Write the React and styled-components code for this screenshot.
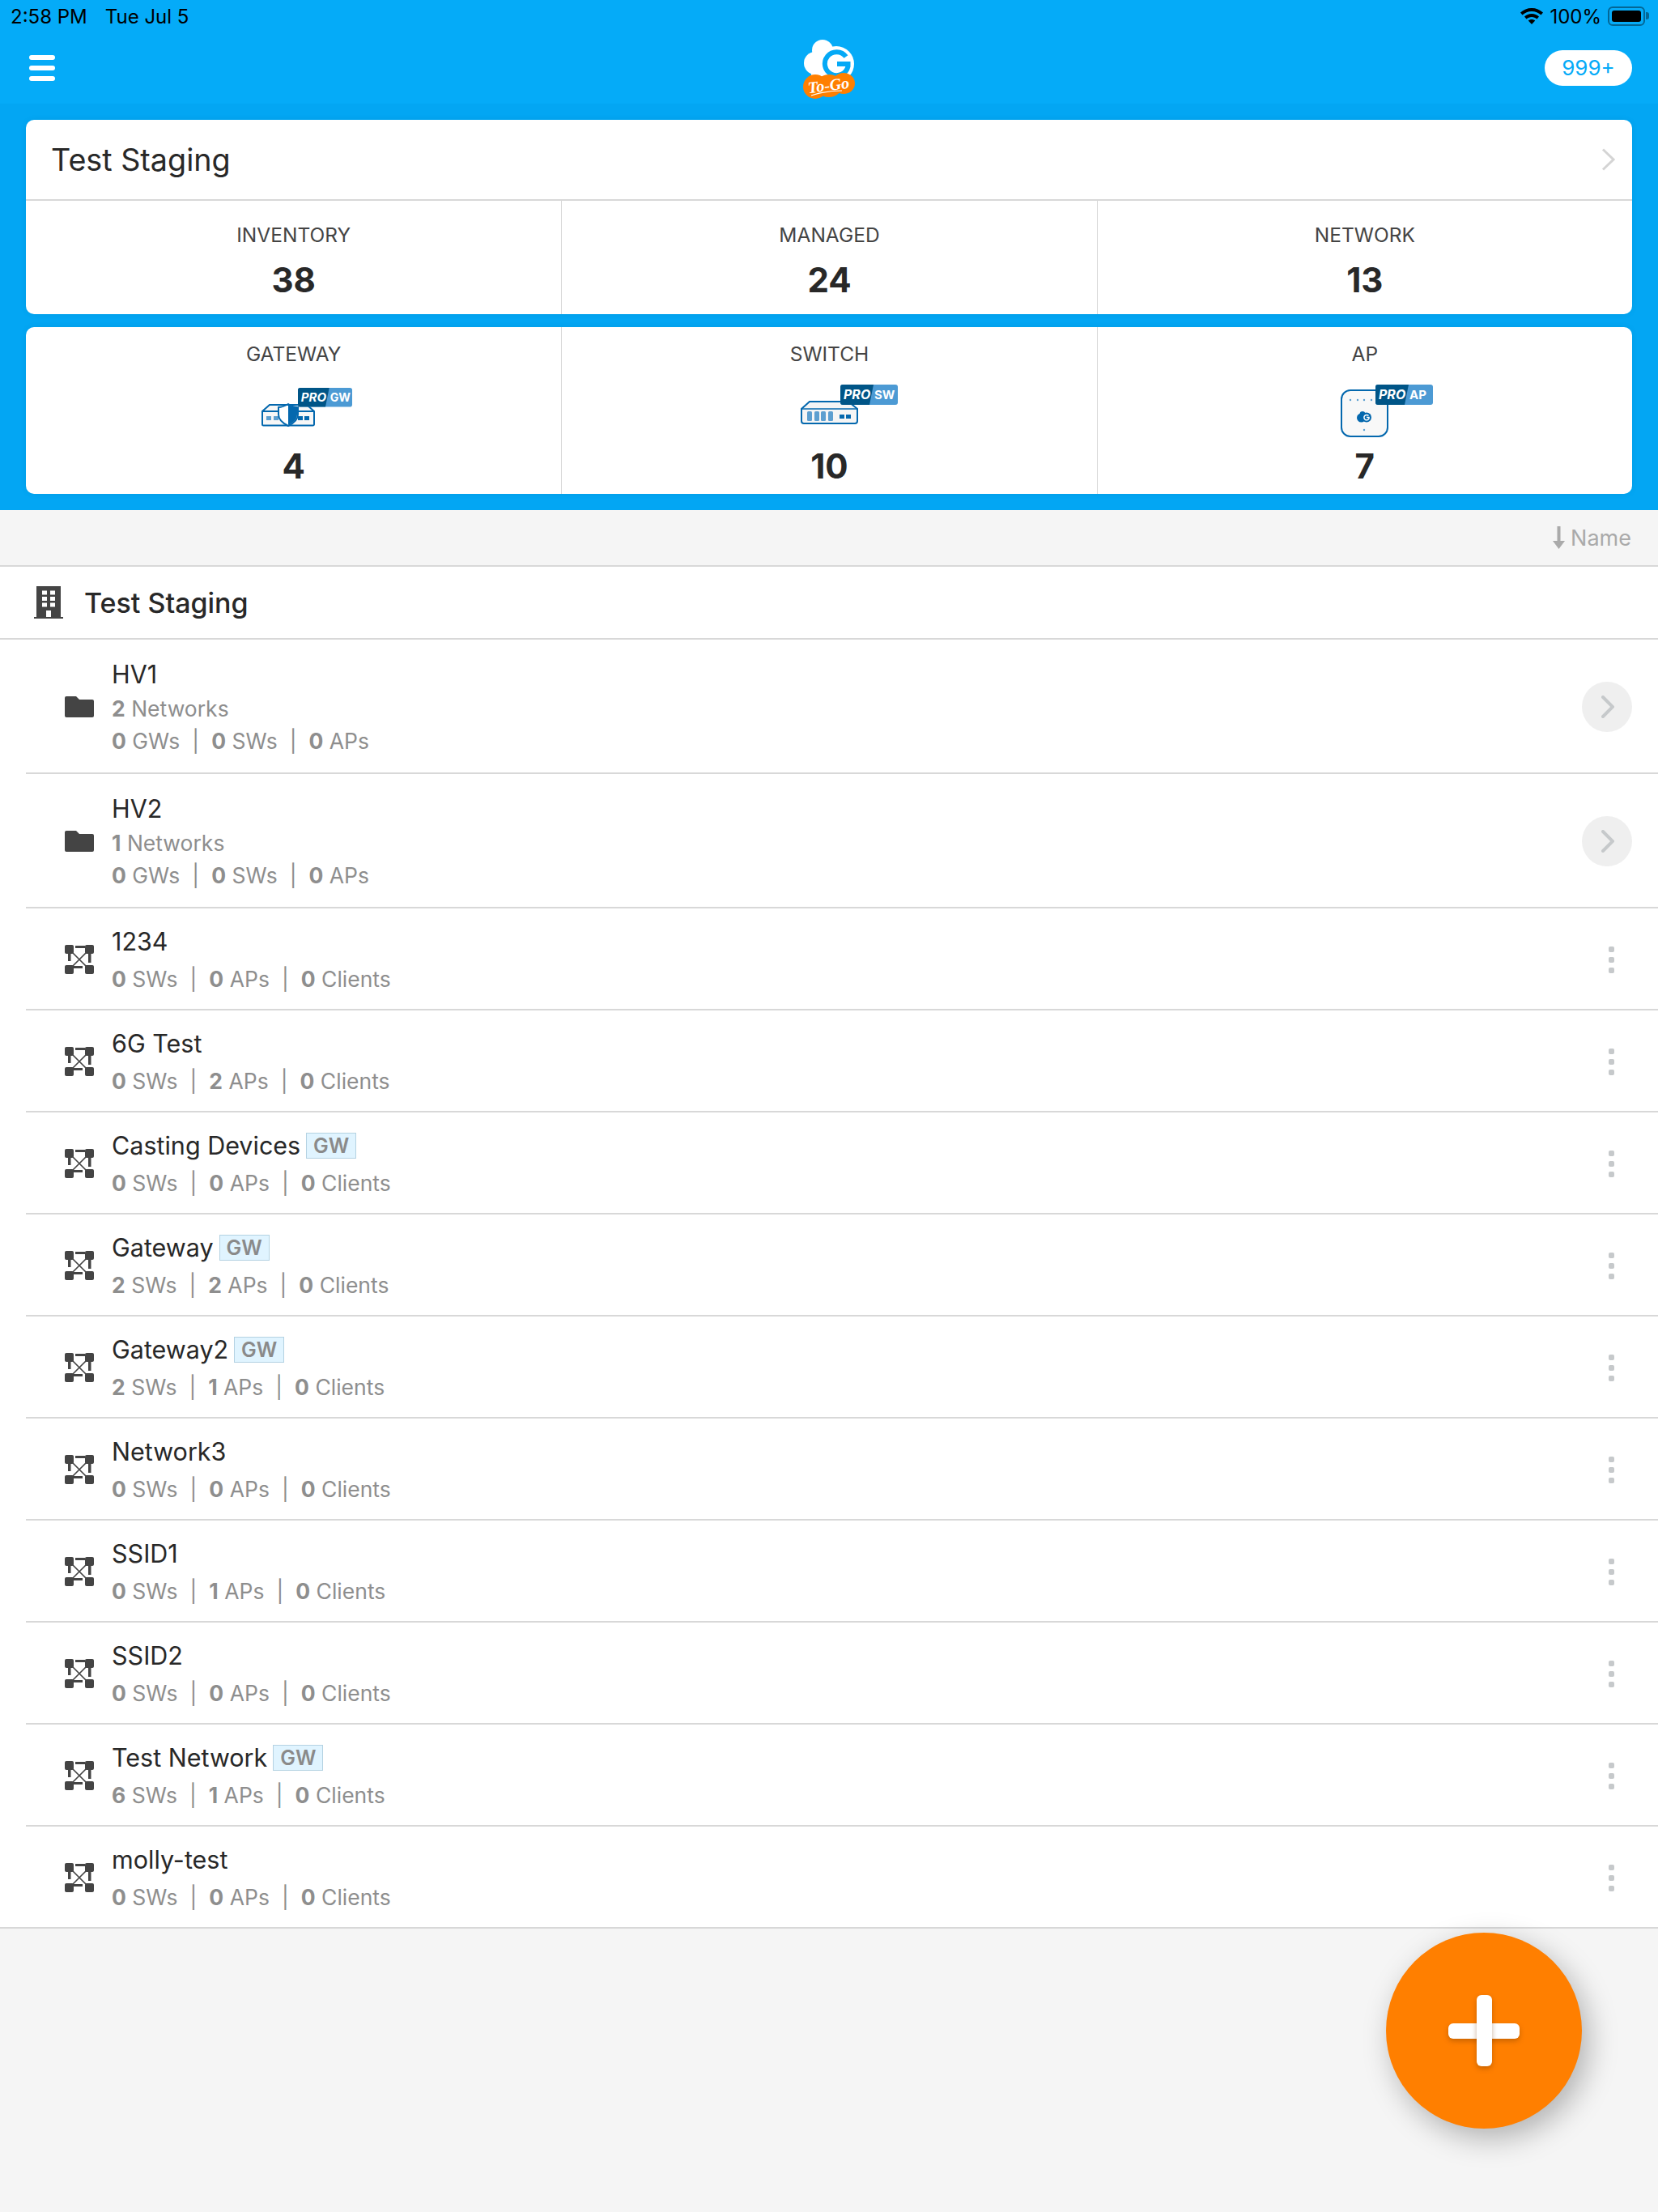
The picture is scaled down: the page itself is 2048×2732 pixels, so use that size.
import React from "react";
import styled, { createGlobalStyle } from "styled-components";

const networks = [
  { name: "1234", sw: 0, ap: 0, cl: 0 },
  { name: "6G Test", sw: 0, ap: 2, cl: 0 },
  { name: "Casting Devices", sw: 0, ap: 0, cl: 0, gw: true },
  { name: "Gateway", sw: 2, ap: 2, cl: 0, gw: true },
  { name: "Gateway2", sw: 2, ap: 1, cl: 0, gw: true },
  { name: "Network3", sw: 0, ap: 0, cl: 0 },
  { name: "SSID1", sw: 0, ap: 1, cl: 0 },
  { name: "SSID2", sw: 0, ap: 0, cl: 0 },
  { name: "Test Network", sw: 6, ap: 1, cl: 0, gw: true },
  { name: "molly-test", sw: 0, ap: 0, cl: 0 },
];

const folders = [
  { name: "HV1", count: 2 },
  { name: "HV2", count: 1 },
];

function ProBadge({ x, y, label, scale = 1 }) {
  return (
    <g transform={`translate(${x} ${y}) scale(${scale})`}>
      <path d="M3 0H68a3 3 0 0 1 3 3V22a3 3 0 0 1-3 3H3a3 3 0 0 1-3-3V3a3 3 0 0 1 3-3z" fill="#4c9ad4" />
      <path d="M3 0H41L36 25H3a3 3 0 0 1-3-3V3a3 3 0 0 1 3-3z" fill="#005587" />
      <text x="4" y="18" fontFamily="Inter, sans-serif" fontSize="16" fontWeight="700" fontStyle="italic" fill="#fff">PRO</text>
      <text x="42" y="18" fontFamily="Inter, sans-serif" fontSize="15" fontWeight="700" fill="#fff">{label}</text>
    </g>
  );
}

function GatewayIcon() {
  return (
    <svg width="180" height="72" viewBox="0 0 180 72">
      <path d="M60 28H106L115 36V52a1.500 1.500 0 0 1-1.500 1.500H52.500A1.500 1.500 0 0 1 51 52V36z" fill="#f7f7f7" stroke="#0468ae" strokeWidth="2" />
      <path d="M51 36H115" stroke="#0468ae" strokeWidth="2" />
      <rect x="56" y="42" width="6" height="5" fill="#5d9fd0" />
      <rect x="65" y="42" width="6" height="5" fill="#5d9fd0" />
      <rect x="95" y="42" width="6" height="5" fill="#0468ae" />
      <rect x="103" y="42" width="6" height="5" fill="#0468ae" />
      <path d="M83 27C78 30 75 31 71 31V40C71 47 77 51 83 54C89 51 95 47 95 40V31C91 31 88 30 83 27z" fill="#fff" stroke="#0468ae" strokeWidth="2" />
      <path d="M83 28C88 30 91 31 94 31V40C94 46 89 50 83 53z" fill="#0468ae" />
      <ProBadge x={95} y={7} label="GW" scale={0.944} />
    </svg>
  );
}

function SwitchIcon() {
  return (
    <svg width="180" height="72" viewBox="0 0 180 72">
      <path d="M66 24H114L125 33V48a3 3 0 0 1-3 3H59a3 3 0 0 1-3-3V33z" fill="#f5f5f5" stroke="#0468ae" strokeWidth="2" />
      <path d="M56 33H125" stroke="#0468ae" strokeWidth="1.500" />
      {[63, 72, 80, 89].map((x) => (
        <rect key={x} x={x} y="36" width="6" height="12" rx="1.500" fill="#5d9fd0" />
      ))}
      <rect x="103" y="40" width="6" height="5" fill="#0468ae" />
      <rect x="111" y="40" width="6" height="5" fill="#0468ae" />
      <ProBadge x={104} y={3} label="SW" />
    </svg>
  );
}

function ApIcon() {
  return (
    <svg width="180" height="72" viewBox="0 0 180 72">
      <rect x="61" y="10" width="57" height="57" rx="11" fill="#f8f8f8" stroke="#0468ae" strokeWidth="2" />
      {[72, 81, 89, 98].map((x) => (
        <circle key={x} cx={x} cy="22" r="1.200" fill="#5d9fd0" />
      ))}
      <circle cx="89" cy="59" r="1.200" fill="#5d9fd0" />
      <circle cx="85.500" cy="44" r="5.500" fill="#0468ae" />
      <circle cx="87" cy="39.500" r="3.500" fill="#0468ae" />
      <circle cx="92" cy="43.500" r="6" fill="#0468ae" />
      <path d="M94.500 41.500A3.200 3.200 0 1 0 95 45L95 43.500H92" fill="none" stroke="#fff" strokeWidth="1.500" />
      <ProBadge x={103} y={3} label="AP" />
    </svg>
  );
}

function NetworkIcon() {
  return (
    <svg width="36" height="36" viewBox="0 0 36 36" fill="#444">
      <rect x="0" y="0" width="11" height="11" rx="2" />
      <rect x="25" y="0" width="11" height="11" rx="2" />
      <rect x="0" y="25" width="11" height="11" rx="2" />
      <rect x="25" y="25" width="11" height="11" rx="2" />
      <rect x="13" y="1" width="12" height="3" />
      <rect x="4" y="10" width="3.500" height="10" />
      <rect x="29" y="10" width="3.500" height="12" />
      <rect x="10" y="26" width="12" height="3" />
      <path d="M6 6L30 30M30 6L6 30" stroke="#444" strokeWidth="1.700" />
    </svg>
  );
}

function FolderIcon() {
  return (
    <svg width="36" height="26" viewBox="0 0 36 26" fill="#444">
      <path d="M2 0H14L18 4H34a2 2 0 0 1 2 2V24a2 2 0 0 1-2 2H2a2 2 0 0 1-2-2V2a2 2 0 0 1 2-2z" />
    </svg>
  );
}

function BuildingIcon() {
  return (
    <svg width="36" height="40" viewBox="0 0 36 40">
      <path d="M3 0H33V38H36V40H0V38H3z" fill="#444" />
      {[5.5, 13, 20.5].map((y) => (
        <React.Fragment key={y}>
          <rect x="10" y={y} width="6" height="5" fill="#fff" />
          <rect x="20" y={y} width="6" height="5" fill="#fff" />
        </React.Fragment>
      ))}
      <rect x="15" y="30" width="6" height="8" fill="#fff" />
    </svg>
  );
}

function Logo() {
  return (
    <svg width="68" height="80" viewBox="0 0 68 80">
      <g fill="#fff">
        <circle cx="26" cy="16" r="13" />
        <circle cx="17" cy="32" r="14" />
        <circle cx="43" cy="33" r="22" />
        <rect x="12" y="30" width="30" height="24" />
      </g>
      <path d="M55 24A14.500 14.500 0 1 0 57.500 36L57.500 33H44" fill="none" stroke="#04a9f6" strokeWidth="6" />
      <g fill="#ff7f00">
        <ellipse cx="17" cy="61" rx="15" ry="15" />
        <ellipse cx="34" cy="60" rx="16" ry="14" />
        <ellipse cx="52" cy="57" rx="14" ry="13" />
      </g>
      <text x="8" y="66" fontFamily="'Liberation Serif', serif" fontSize="20" fontWeight="700" fontStyle="italic" fill="#fff" transform="rotate(-7 34 62)">To-Go</text>
      <path d="M12 72C24 68 36 66 50 66" fill="none" stroke="#fff" strokeWidth="1.200" />
    </svg>
  );
}

function StatCell({ label, value, children }) {
  return (
    <Stat $withIcon={!!children}>
      <StatLabel>{label}</StatLabel>
      {children && <StatIcon>{children}</StatIcon>}
      <StatValue $withIcon={!!children}>{value}</StatValue>
    </Stat>
  );
}

function Count({ value, label }) {
  return (
    <span>
      <b>{value}</b> {label}
    </span>
  );
}

function Counts({ items }) {
  return (
    <SubLine>
      {items.map(([value, label], i) => (
        <React.Fragment key={label}>
          {i > 0 && <Pipe>|</Pipe>}
          <Count value={value} label={label} />
        </React.Fragment>
      ))}
    </SubLine>
  );
}

export default function App() {
  return (
    <Page>
      <GlobalStyle />
      <TopBlue>
        <Header>
          <StatusBar>
            <StatusLeft>
              <span>2:58 PM</span>
              <span>Tue Jul 5</span>
            </StatusLeft>
            <StatusRight>
              <svg width="28" height="20" viewBox="0 0 28 20">
                <path d="M14 0C8.500 0 4 2 0 5.500L2.500 8.500C5.500 5.800 9.500 4 14 4S22.500 5.800 25.500 8.500L28 5.500C24 2 19.500 0 14 0z" />
                <path d="M14 7C10.500 7 7.500 8.300 5 10.500L7.500 13.500C9.300 12 11.500 11 14 11S18.700 12 20.500 13.500L23 10.500C20.500 8.300 17.500 7 14 7z" />
                <path d="M14 14C12.500 14 11 14.500 9.800 15.500L14 20L18.200 15.500C17 14.500 15.500 14 14 14z" />
              </svg>
              <span>100%</span>
              <Battery>
                <BatteryFill />
              </Battery>
            </StatusRight>
          </StatusBar>
          <NavBar>
            <Burger>
              <i />
              <i />
              <i />
            </Burger>
            <LogoWrap>
              <Logo />
            </LogoWrap>
            <NotifPill>999+</NotifPill>
          </NavBar>
        </Header>
        <Cards>
          <Card>
            <CardTitle>
              <span>Test Staging</span>
              <svg width="18" height="28" viewBox="0 0 18 28" fill="none" stroke="#d4d4d4" strokeWidth="3">
                <path d="M2 1.500L15 14L2 26.500" />
              </svg>
            </CardTitle>
            <StatRow $h={140}>
              <StatCell label="INVENTORY" value="38" />
              <StatCell label="MANAGED" value="24" />
              <StatCell label="NETWORK" value="13" />
            </StatRow>
          </Card>
          <Card>
            <StatRow $h={206}>
              <StatCell label="GATEWAY" value="4">
                <GatewayIcon />
              </StatCell>
              <StatCell label="SWITCH" value="10">
                <SwitchIcon />
              </StatCell>
              <StatCell label="AP" value="7">
                <ApIcon />
              </StatCell>
            </StatRow>
          </Card>
        </Cards>
      </TopBlue>

      <SortBar>
        <svg width="15" height="28" viewBox="0 0 15 28" fill="#aaa">
          <path d="M5.500 0H9.500V18H15L7.500 28L0 18H5.500z" />
        </svg>
        <span>Name</span>
      </SortBar>

      <List>
        <SiteRow>
          <BuildingIcon />
          <SiteName>Test Staging</SiteName>
        </SiteRow>

        {folders.map((f) => (
          <Row key={f.name} $tall>
            <RowIcon>
              <FolderIcon />
            </RowIcon>
            <RowBody $tall>
              <RowName>{f.name}</RowName>
              <SubLine>
                <Count value={f.count} label="Networks" />
              </SubLine>
              <Counts items={[[0, "GWs"], [0, "SWs"], [0, "APs"]]} />
            </RowBody>
            <ChevronCircle>
              <svg width="16" height="28" viewBox="0 0 16 28" fill="none" stroke="#c6c9cb" strokeWidth="4" strokeLinecap="round">
                <path d="M2 2L14 14L2 26" />
              </svg>
            </ChevronCircle>
          </Row>
        ))}

        {networks.map((n, i) => (
          <Row key={n.name} $last={i === networks.length - 1}>
            <RowIcon>
              <NetworkIcon />
            </RowIcon>
            <RowBody>
              <NameLine>
                <RowName>{n.name}</RowName>
                {n.gw && <GwTag>GW</GwTag>}
              </NameLine>
              <Counts items={[[n.sw, "SWs"], [n.ap, "APs"], [n.cl, "Clients"]]} />
            </RowBody>
            <Dots>
              <i />
              <i />
              <i />
            </Dots>
          </Row>
        ))}
      </List>

      <Fab>
        <Plus />
      </Fab>
    </Page>
  );
}

const GlobalStyle = createGlobalStyle`
  html, body {
    margin: 0;
    padding: 0;
    background: #f5f5f5;
  }
  body {
    font-family: Inter, "Liberation Sans", sans-serif;
  }
`;

const Page = styled.div`
  position: relative;
  width: 2048px;
  height: 2732px;
  overflow: hidden;
  background: #f5f5f5;
  color: #282828;
`;

const TopBlue = styled.div`
  background: #03a6f3;
  height: 630px;
`;

const Header = styled.header`
  height: 128px;
  background: #05abf8;
`;

const StatusBar = styled.div`
  display: flex;
  justify-content: space-between;
  align-items: center;
  height: 40px;
  padding: 0 16px 0 13px;
  font-size: 24px;
  color: #000;
`;

const StatusLeft = styled.div`
  display: flex;
  gap: 22px;
`;

const StatusRight = styled.div`
  display: flex;
  align-items: center;
  gap: 8px;
`;

const Battery = styled.div`
  position: relative;
  box-sizing: border-box;
  width: 46px;
  height: 24px;
  padding: 3px;
  border: 2px solid rgba(0, 0, 0, 0.4);
  border-radius: 6px;
  &::after {
    content: "";
    position: absolute;
    right: -7px;
    top: 5px;
    width: 4px;
    height: 9px;
    border-radius: 0 3px 3px 0;
    background: rgba(0, 0, 0, 0.4);
  }
`;

const BatteryFill = styled.div`
  height: 100%;
  background: #000;
  border-radius: 3px;
`;

const NavBar = styled.div`
  display: flex;
  justify-content: space-between;
  align-items: center;
  height: 88px;
  padding: 0 32px 0 36px;
  box-sizing: border-box;
`;

const Burger = styled.div`
  display: flex;
  flex-direction: column;
  gap: 7px;
  width: 32px;
  i {
    display: block;
    height: 6px;
    border-radius: 3px;
    background: #fff;
  }
`;

const LogoWrap = styled.div`
  display: flex;
  margin-left: 72px;
  margin-top: 3px;
`;

const NotifPill = styled.div`
  width: 108px;
  height: 44px;
  border-radius: 22px;
  background: #fff;
  color: #05abf8;
  font-size: 26px;
  line-height: 44px;
  text-align: center;
`;

const Cards = styled.div`
  display: flex;
  flex-direction: column;
  gap: 16px;
  padding: 20px 32px 0;
`;

const Card = styled.section`
  background: #fff;
  border-radius: 10px;
  overflow: hidden;
  box-shadow: 0 0 8px rgba(0, 0, 0, 0.06);
`;

const CardTitle = styled.div`
  display: flex;
  justify-content: space-between;
  align-items: center;
  box-sizing: border-box;
  height: 100px;
  padding: 0 20px 0 31px;
  border-bottom: 2px solid #d8d8d8;
  font-size: 37.700px;
  color: #282828;
`;

const StatRow = styled.div`
  display: grid;
  grid-template-columns: repeat(3, 1fr);
  height: ${(p) => p.$h}px;
`;

const Stat = styled.div`
  display: flex;
  flex-direction: column;
  align-items: center;
  padding-top: ${(p) => (p.$withIcon ? 19 : 28)}px;
  border-left: 1px solid #d8d8d8;
  &:first-child {
    border-left: 0;
  }
`;

const StatLabel = styled.div`
  font-size: 24.500px;
  line-height: 28px;
  color: #444;
`;

const StatIcon = styled.div`
  display: flex;
  height: 72px;
  margin-top: 21px;
`;

const StatValue = styled.div`
  margin-top: ${(p) => (p.$withIcon ? 7 : 17)}px;
  font-size: 42px;
  line-height: 50px;
  font-weight: 700;
  color: #282828;
`;

const SortBar = styled.div`
  display: flex;
  justify-content: flex-end;
  align-items: center;
  gap: 7px;
  box-sizing: border-box;
  height: 70px;
  padding-right: 33px;
  border-bottom: 2px solid #d8d8d8;
  font-size: 27px;
  color: #aaa;
`;

const List = styled.div`
  background: #fff;
`;

const SiteRow = styled.div`
  display: flex;
  align-items: center;
  gap: 26px;
  box-sizing: border-box;
  height: 90px;
  padding-left: 42px;
  border-bottom: 2px solid #d8d8d8;
`;

const SiteName = styled.div`
  font-size: 34px;
  font-weight: 500;
  color: #282828;
`;

const Row = styled.div`
  display: flex;
  align-items: center;
  box-sizing: border-box;
  height: ${(p) => (p.$tall ? 166 : 126)}px;
  margin-left: ${(p) => (p.$last ? 0 : 32)}px;
  padding-top: 2px;
  padding-left: ${(p) => (p.$last ? 80 : 48)}px;
  padding-right: 32px;
  border-bottom: 2px solid #d8d8d8;
`;

const RowIcon = styled.div`
  display: flex;
  flex: none;
  width: 36px;
  margin-right: 22px;
`;

const RowBody = styled.div`
  flex: 1;
  display: flex;
  flex-direction: column;
  gap: ${(p) => (p.$tall ? 6 : 10)}px;
`;

const NameLine = styled.div`
  display: flex;
  align-items: center;
  gap: 7px;
`;

const RowName = styled.div`
  font-size: 30.500px;
  line-height: 38px;
  color: #282828;
`;

const GwTag = styled.div`
  box-sizing: border-box;
  width: 62px;
  height: 32px;
  background: #e0f4ff;
  border: 1px solid #b4d2e2;
  color: #8a8a8a;
  font-size: 25px;
  line-height: 31px;
  font-weight: 600;
  text-align: center;
`;

const SubLine = styled.div`
  display: flex;
  font-size: 26.500px;
  line-height: 34px;
  color: #8e8e8e;
  b {
    font-weight: 700;
  }
`;

const Pipe = styled.span`
  margin: 0 15px;
`;

const ChevronCircle = styled.div`
  display: flex;
  align-items: center;
  justify-content: center;
  width: 62px;
  height: 62px;
  padding-left: 2px;
  box-sizing: border-box;
  border-radius: 50%;
  background: #efefef;
`;

const Dots = styled.div`
  display: flex;
  flex-direction: column;
  gap: 6px;
  margin-right: 22px;
  i {
    display: block;
    width: 7px;
    height: 7px;
    border-radius: 2px;
    background: #c6c9cb;
  }
`;

const Fab = styled.div`
  position: absolute;
  left: 1712px;
  top: 2387px;
  width: 242px;
  height: 242px;
  border-radius: 50%;
  background: #ff7f00;
  box-shadow: 8px 12px 36px rgba(0, 0, 0, 0.28);
  display: flex;
  align-items: center;
  justify-content: center;
`;

const Plus = styled.div`
  position: relative;
  width: 88px;
  height: 19px;
  border-radius: 6px;
  background: #fff;
  box-shadow: 0 3px 6px rgba(120, 60, 0, 0.4);
  &::after {
    content: "";
    position: absolute;
    left: 34.500px;
    top: -34.500px;
    width: 19px;
    height: 88px;
    border-radius: 6px;
    background: #fff;
    box-shadow: 0 3px 6px rgba(120, 60, 0, 0.4);
  }
`;
